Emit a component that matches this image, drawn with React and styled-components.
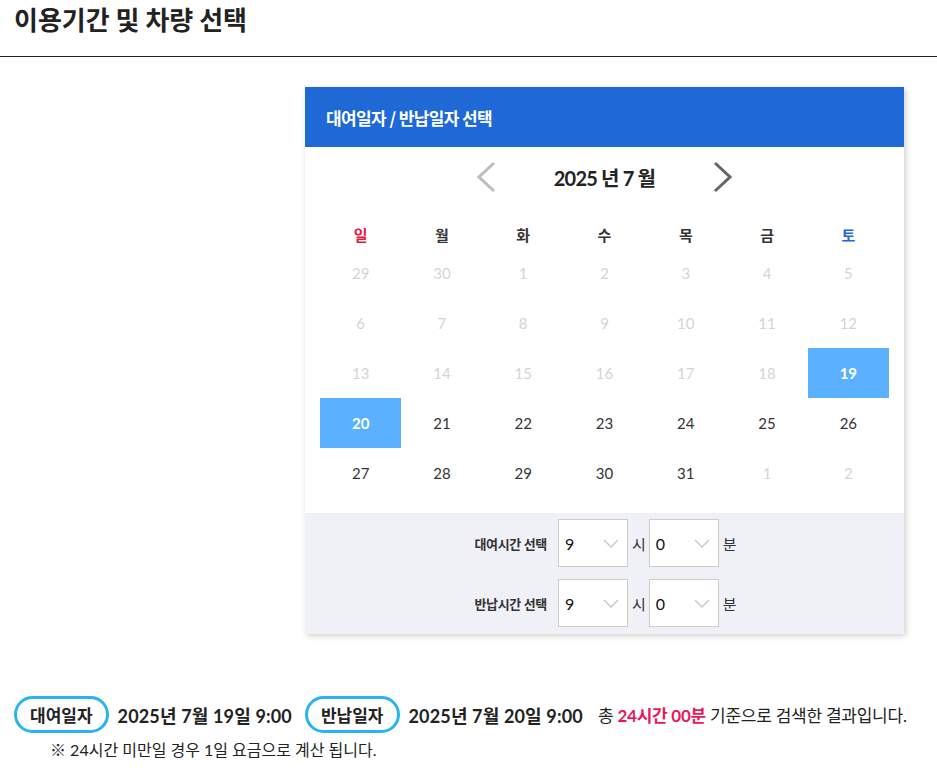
import React from 'react';
import styled, { createGlobalStyle } from 'styled-components';

const GlobalStyle = createGlobalStyle`
  body {
    margin: 0;
    background: #fff;
    font-family: Lato, "Noto Sans CJK KR", sans-serif;
    color: #222;
  }
`;

const colors = {
  blue: '#1e69d6',
  pick: '#5bb1ff',
  sun: '#e8173f',
  sat: '#2467d6',
  dim: '#d4d4d4',
  text: '#333',
  pill: '#2ab3f3',
  red: '#e8195a',
  panelBg: '#f0f1f6',
};

// --- page header --- //
const PageHeader = styled.header`
  padding: 0 14px 18px;
  border-bottom: 1px solid #222;
`;

const PageTitle = styled.h1`
  margin: 0;
  font-family: "Noto Sans CJK KR", sans-serif;
  font-size: 26px;
  font-weight: 700;
  line-height: 38px;
  color: #222;
`;

// --- calendar panel --- //
const Main = styled.main`
  padding: 30px 0 0 305px;
`;

const Panel = styled.section`
  width: 599px;
  background: #fff;
  box-shadow: 2px 2px 6px rgba(0, 0, 0, 0.18);
`;

const PanelHead = styled.div`
  height: 60px;
  background: ${colors.blue};
  display: flex;
  align-items: center;
  padding-left: 21px;
  color: #fff;
  font-family: "Noto Sans CJK KR", sans-serif;
  font-size: 17px;
  font-weight: 700;
  letter-spacing: -0.6px;
`;

const CalBody = styled.div`
  padding: 0 15px 15px;
`;

const Nav = styled.div`
  height: 60px;
  display: flex;
  align-items: center;
  justify-content: center;
  gap: 56px;
`;

const NavTitle = styled.div`
  font-size: 20px;
  font-weight: 700;
  color: #222;
  letter-spacing: -0.8px;
  min-width: 100px;
  text-align: center;
`;

const Arrow = styled.button`
  border: 0;
  background: none;
  padding: 0;
  width: 22px;
  height: 32px;
  display: flex;
  align-items: center;
  justify-content: center;
  cursor: pointer;
`;

const Grid = styled.div`
  display: grid;
  grid-template-columns: repeat(7, 1fr);
`;

const WeekRow = styled(Grid)`
  padding-top: 15px;
`;

const WeekDay = styled.div`
  height: 26px;
  line-height: 26px;
  text-align: center;
  font-family: "Noto Sans CJK KR", sans-serif;
  font-size: 15px;
  font-weight: 700;
  color: ${p => (p.$tone === 'sun' ? colors.sun : p.$tone === 'sat' ? colors.sat : colors.text)};
`;

const Day = styled.div`
  height: 50px;
  display: flex;
  align-items: center;
  justify-content: center;
  font-size: 15px;
  background: ${p => (p.$picked ? colors.pick : 'transparent')};
  color: ${p => (p.$picked ? '#fff' : p.$dim ? colors.dim : colors.text)};
  font-weight: ${p => (p.$picked ? 700 : 400)};
`;

// --- time select --- //
const TimeBox = styled.div`
  background: ${colors.panelBg};
  padding: 6px 0 7px;
  display: flex;
  flex-direction: column;
  gap: 12px;
`;

const TimeRow = styled.div`
  display: flex;
  align-items: center;
  justify-content: center;
  padding-left: 2px;
`;

const TimeLabel = styled.span`
  font-family: "Noto Sans CJK KR", sans-serif;
  font-size: 13px;
  font-weight: 700;
  color: #333;
  letter-spacing: -0.3px;
  margin-right: 11px;
`;

const SelectBox = styled.div`
  width: 70px;
  height: 48px;
  box-sizing: border-box;
  background: #fff;
  border: 1px solid #ccc;
  display: flex;
  align-items: center;
  justify-content: space-between;
  padding: 0 8px 0 6px;
  font-size: 16px;
  color: #111;
`;

const Unit = styled.span`
  font-family: "Noto Sans CJK KR", sans-serif;
  font-size: 15px;
  color: #333;
  margin: 0 3px 0 4px;

  &:last-child {
    margin-right: 0;
  }
`;

// --- summary --- //
const Summary = styled.div`
  padding: 62px 0 0 14px;
`;

const SummaryLine = styled.div`
  display: flex;
  align-items: center;
  white-space: nowrap;
`;

const Pill = styled.span`
  height: 37px;
  box-sizing: border-box;
  padding: 0 13px;
  border: 3px solid ${colors.pill};
  border-radius: 19px;
  display: inline-flex;
  align-items: center;
  font-family: "Noto Sans CJK KR", sans-serif;
  font-size: 17px;
  font-weight: 700;
  color: #222;
  margin-right: 9px;
`;

const DateText = styled.span`
  font-size: 18px;
  font-weight: 700;
  color: #222;
  letter-spacing: 0.15px;
  margin-right: ${p => p.$gap || 0}px;
`;

const Plain = styled.span`
  font-size: 17px;
  color: #222;
  letter-spacing: -0.25px;
`;

const Red = styled.span`
  font-weight: 700;
  color: ${colors.red};
`;

const Note = styled.p`
  margin: 4px 0 0 36px;
  font-size: 16px;
  color: #222;
`;

const Chevron = ({ dir, color }) => (
  <svg width="20" height="32" viewBox="0 0 20 32">
    <polyline
      points={dir === 'left' ? '17,2 2,16 17,30' : '3,2 18,16 3,30'}
      fill="none"
      stroke={color}
      strokeWidth="3"
    />
  </svg>
);

const Caret = () => (
  <svg width="16" height="9" viewBox="0 0 16 9">
    <polyline points="1,1 8,8 15,1" fill="none" stroke="#c9c9dc" strokeWidth="1.5" />
  </svg>
);

const weekDays = ['일', '월', '화', '수', '목', '금', '토'];

const days = [
  [29, 30, 1, 2, 3, 4, 5].map(d => ({ d, dim: true })),
  [6, 7, 8, 9, 10, 11, 12].map(d => ({ d, dim: true })),
  [13, 14, 15, 16, 17, 18].map(d => ({ d, dim: true })).concat({ d: 19, picked: true }),
  [{ d: 20, picked: true }].concat([21, 22, 23, 24, 25, 26].map(d => ({ d }))),
  [27, 28, 29, 30, 31].map(d => ({ d })).concat([{ d: 1, dim: true }, { d: 2, dim: true }]),
].flat();

const TimePick = ({ label }) => (
  <TimeRow>
    <TimeLabel>{label}</TimeLabel>
    <SelectBox>9<Caret /></SelectBox>
    <Unit>시</Unit>
    <SelectBox>0<Caret /></SelectBox>
    <Unit>분</Unit>
  </TimeRow>
);

export default function App() {
  return (
    <>
      <GlobalStyle />
      <PageHeader>
        <PageTitle>이용기간 및 차량 선택</PageTitle>
      </PageHeader>

      <Main>
        <Panel>
          <PanelHead>대여일자 / 반납일자 선택</PanelHead>
          <CalBody>
            <Nav>
              <Arrow><Chevron dir="left" color="#bdbdbd" /></Arrow>
              <NavTitle>2025 년 7 월</NavTitle>
              <Arrow><Chevron dir="right" color="#666" /></Arrow>
            </Nav>
            <WeekRow>
              {weekDays.map((w, i) => (
                <WeekDay key={w} $tone={i === 0 ? 'sun' : i === 6 ? 'sat' : ''}>{w}</WeekDay>
              ))}
            </WeekRow>
            <Grid>
              {days.map((x, i) => (
                <Day key={i} $dim={x.dim} $picked={x.picked}>{x.d}</Day>
              ))}
            </Grid>
          </CalBody>
          <TimeBox>
            <TimePick label="대여시간 선택" />
            <TimePick label="반납시간 선택" />
          </TimeBox>
        </Panel>
      </Main>

      <Summary>
        <SummaryLine>
          <Pill>대여일자</Pill>
          <DateText $gap={13}>2025년 7월 19일 9:00</DateText>
          <Pill>반납일자</Pill>
          <DateText $gap={15}>2025년 7월 20일 9:00</DateText>
          <Plain>총 <Red>24시간 00분</Red> 기준으로 검색한 결과입니다.</Plain>
        </SummaryLine>
        <Note>※ 24시간 미만일 경우 1일 요금으로 계산 됩니다.</Note>
      </Summary>
    </>
  );
}
